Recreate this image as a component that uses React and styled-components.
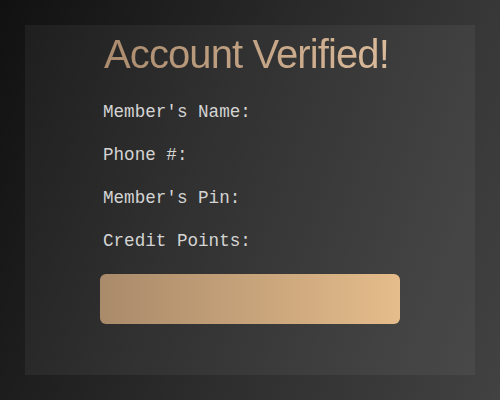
import styled, { createGlobalStyle } from "styled-components";

const GlobalStyle = createGlobalStyle`
	html, body {
		margin: 0;
		height: 100%;
	}
	body {
		background: linear-gradient(110deg, #111111 0%, #2b2b2b 50%, #424242 100%);
	}
`;

const Page = styled.div`
	width: 500px;
	height: 400px;
	padding: 25px;
	box-sizing: border-box;
`;

const Panel = styled.div`
	height: 100%;
	background: rgba(255, 255, 255, 0.05);
	display: flex;
	flex-direction: column;
	align-items: center;
	padding-top: 6px;
	box-sizing: border-box;
`;

const Column = styled.div`
	width: 300px;
	display: flex;
	flex-direction: column;
`;

const Title = styled.h1`
	margin: 0;
	padding-left: 4px;
	font-family: "Liberation Sans", Arial, sans-serif;
	font-weight: 400;
	font-size: 40px;
	line-height: 46px;
	letter-spacing: -0.9px;
	white-space: nowrap;
	background: linear-gradient(to right, #a98a6d, #dcbc9c);
	-webkit-background-clip: text;
	background-clip: text;
	color: transparent;
`;

const Fields = styled.div`
	display: flex;
	flex-direction: column;
	gap: 25px;
	margin-top: 26px;
	padding-left: 3px;
`;

const Label = styled.div`
	font-family: "Liberation Mono", "Courier New", monospace;
	font-size: 17.6px;
	line-height: 18px;
	color: #d4d4d4;
`;

const Button = styled.button`
	margin-top: 24px;
	height: 50px;
	width: 300px;
	border: none;
	border-radius: 6px;
	background: linear-gradient(to right, #a98a6a, #e5bc8b);
	cursor: pointer;
`;

const App = () => {
	const fields = ["Member's Name:", "Phone #:", "Member's Pin:", "Credit Points:"];

	return (
		<>
			<GlobalStyle />
			<Page>
				<Panel>
					<Column>
						<Title>Account Verified!</Title>
						<Fields>
							{fields.map((f) => (
								<Label key={f}>{f}</Label>
							))}
						</Fields>
						<Button />
					</Column>
				</Panel>
			</Page>
		</>
	);
};

export default App;
